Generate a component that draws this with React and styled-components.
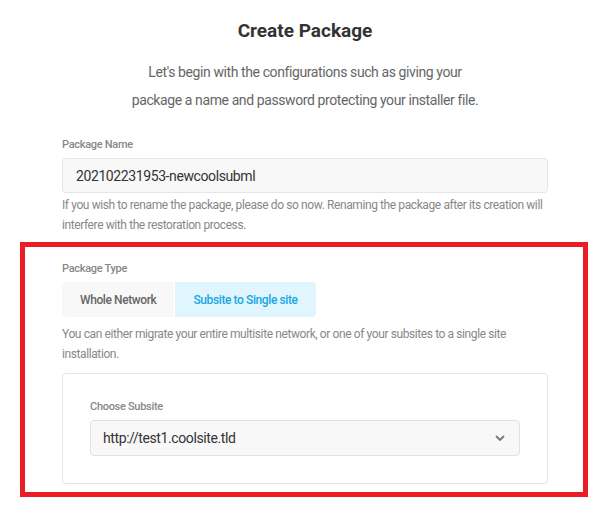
import styled, { createGlobalStyle } from "styled-components";

const GlobalStyle = createGlobalStyle`
  body {
    margin: 0;
    background: #ffffff;
    font-family: Roboto, "Open Sans", sans-serif;
    letter-spacing: -0.4px;
  }
`;

const Page = styled.div`
  width: 610px;
  box-sizing: border-box;
  padding: 19px 22px 10px 20px;
`;

const Intro = styled.div`
  padding: 0 40px 0 42px;
`;

const Title = styled.h1`
  margin: 0;
  color: #333333;
  font-size: 19px;
  font-weight: 700;
  line-height: 24px;
  letter-spacing: 0;
  text-align: center;
`;

const Lead = styled.p`
  margin: 15px 0 0;
  color: #666666;
  font-size: 14px;
  line-height: 28px;
  text-align: center;
`;

const Field = styled.div`
  display: flex;
  flex-direction: column;
  margin-top: ${(p) => p.$top || 0}px;
`;

const Label = styled.label`
  color: #888888;
  font-size: 11px;
  font-weight: 500;
  line-height: 16px;
  letter-spacing: -0.3px;
  margin-bottom: 5px;
`;

const TextInput = styled.input`
  box-sizing: border-box;
  height: 35px;
  padding: 0 13px;
  border: 1px solid #e6e6e6;
  border-radius: 4px;
  background: #f8f8f8;
  color: #333333;
  font-family: Roboto, sans-serif;
  font-size: 14px;
  letter-spacing: -0.4px;
  outline: none;
`;

const Help = styled.p`
  margin: ${(p) => p.$top || 2}px 0 0;
  color: #888888;
  font-size: 12px;
  line-height: 20px;
`;

const Highlight = styled.section`
  margin-top: 7px;
  border: 5px solid #ec1c24;
  padding: 14px 35px 8px 37px;
`;

const Tabs = styled.div`
  display: flex;
  gap: 1px;
`;

const Tab = styled.button`
  height: 35px;
  padding: 0 18px;
  border: none;
  border-radius: ${(p) => (p.$first ? "4px 0 0 4px" : "0 4px 4px 0")};
  background: ${(p) => (p.$active ? "#e1f5fe" : "#f8f8f8")};
  color: ${(p) => (p.$active ? "#17a8e3" : "#666666")};
  font-family: Roboto, sans-serif;
  font-size: 12px;
  font-weight: 500;
  letter-spacing: -0.4px;
  cursor: pointer;
`;

const Card = styled.div`
  margin-top: 9px;
  border: 1px solid #e6e6e6;
  border-radius: 4px;
  padding: 25px 27px 27px;
`;

const SelectBox = styled.div`
  box-sizing: border-box;
  height: 36px;
  display: flex;
  align-items: center;
  justify-content: space-between;
  padding: 0 14px 0 12px;
  border: 1px solid #e2e2e2;
  border-radius: 4px;
  background: #f8f8f8;
  color: #333333;
  font-size: 14px;
`;

const Chevron = () => (
  <svg width="10" height="7" viewBox="0 0 10 7" fill="none">
    <path d="M1.5 1.5 5 5l3.5-3.5" stroke="#777" strokeWidth="1.8" strokeLinecap="round" strokeLinejoin="round" />
  </svg>
);

const App = () => {
  return (
    <>
      <GlobalStyle />
      <Page>
        <Intro>
          <Title>Create Package</Title>
          <Lead>
            Let's begin with the configurations such as giving your
            <br />
            package a name and password protecting your installer file.
          </Lead>
          <Field $top={23}>
            <Label>Package Name</Label>
            <TextInput type="text" defaultValue="202102231953-newcoolsubml" readOnly />
          </Field>
          <Help>
            If you wish to rename the package, please do so now. Renaming the package after its creation will
            interfere with the restoration process.
          </Help>
        </Intro>
        <Highlight>
          <Field>
            <Label>Package Type</Label>
            <Tabs>
              <Tab $first>Whole Network</Tab>
              <Tab $active>Subsite to Single site</Tab>
            </Tabs>
          </Field>
          <Help $top={7}>
            You can either migrate your entire multisite network, or one of your subsites to a single site
            installation.
          </Help>
          <Card>
            <Field>
              <Label>Choose Subsite</Label>
              <SelectBox>
                <span>http://test1.coolsite.tld</span>
                <Chevron />
              </SelectBox>
            </Field>
          </Card>
        </Highlight>
      </Page>
    </>
  );
};

export default App;
